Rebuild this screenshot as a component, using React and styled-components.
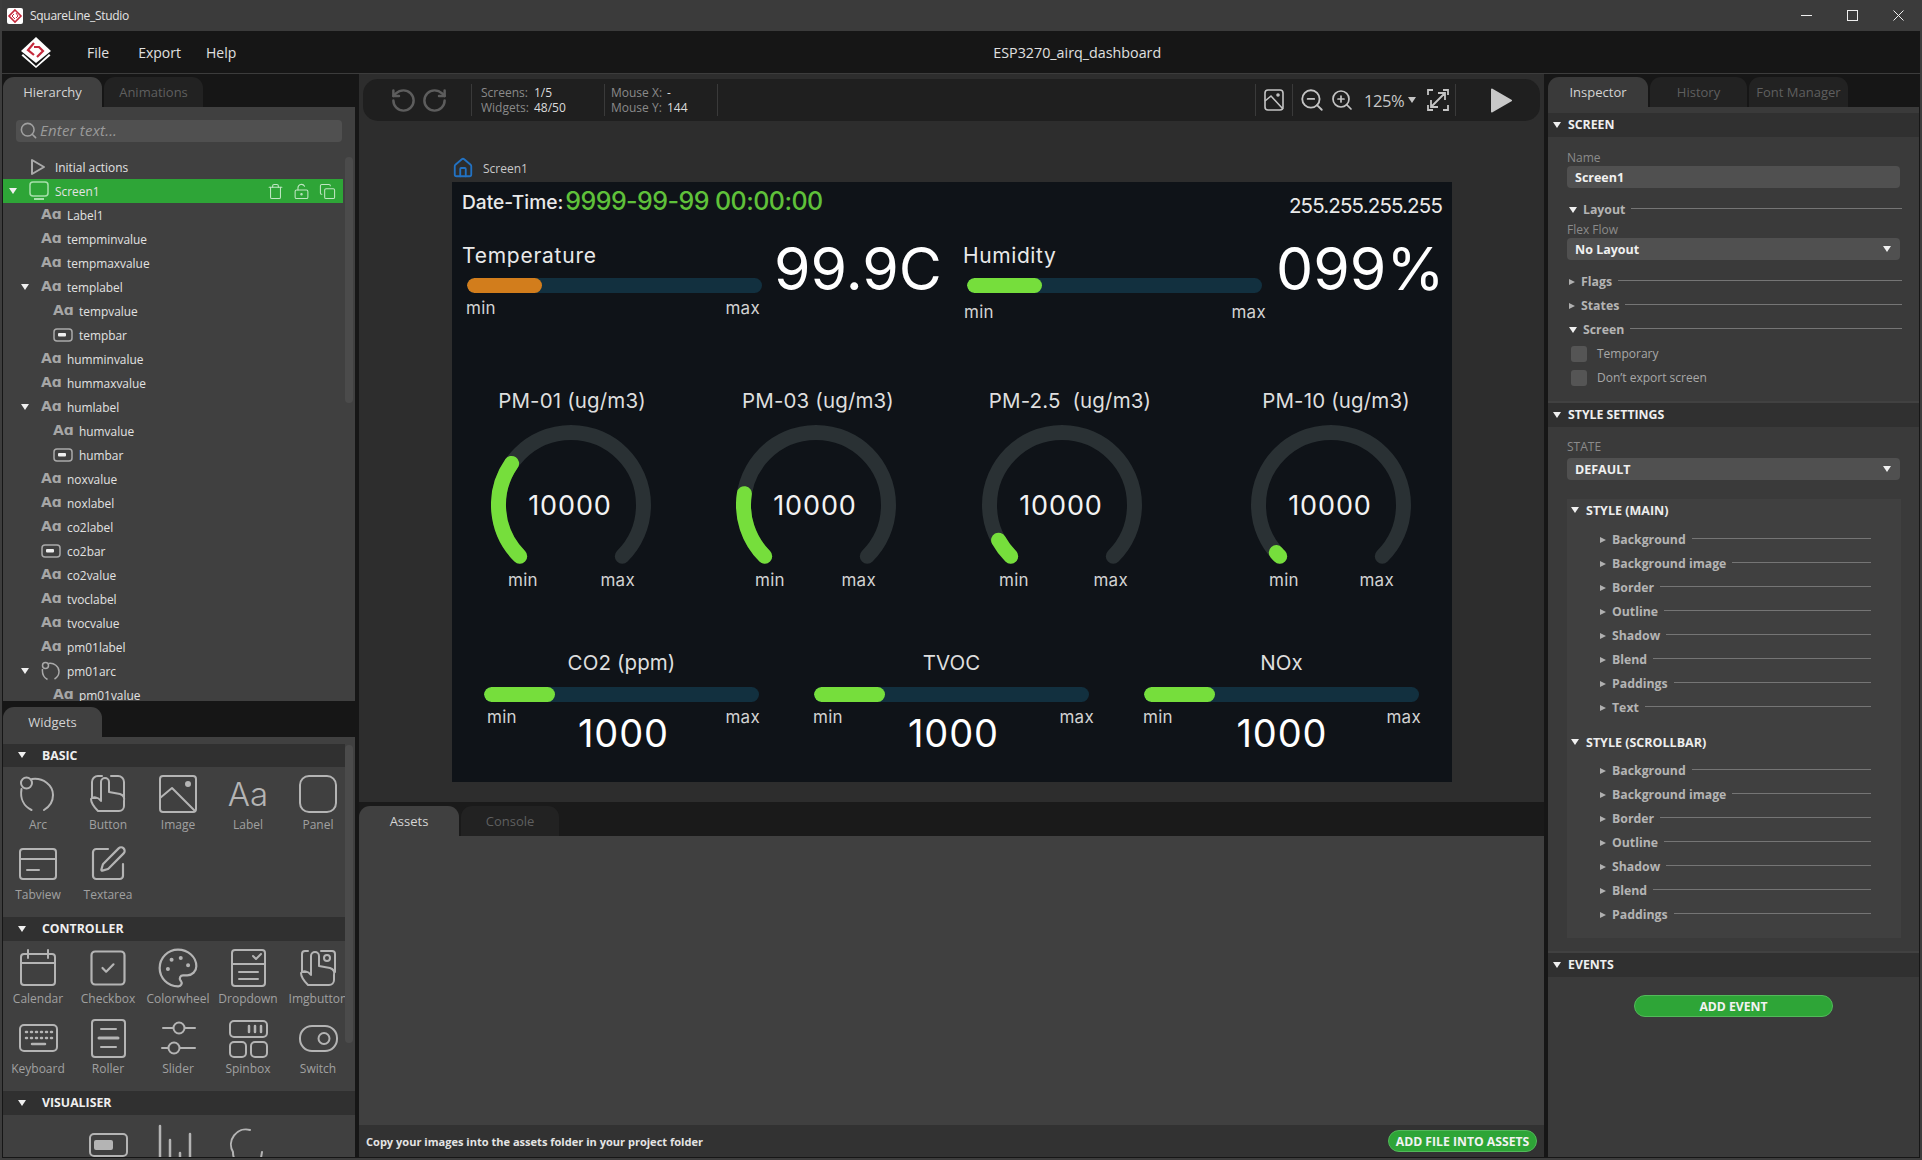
import React from 'react'
import styled, { createGlobalStyle } from 'styled-components'
import { Copy, LockKeyholeOpen, Trash, Search, RotateCcw, RotateCw, ZoomIn, ZoomOut, House, Palette, SquarePen, SquareCheck } from 'lucide-react'

const Global = createGlobalStyle`
    html, body { margin: 0; padding: 0; background: #161616; }
    * { box-sizing: border-box; }
    body { font-family: "Open Sans", "Noto Sans", sans-serif; font-size: 12px; color: #ddd; }
`

const Window = styled.div`
    width: 1922px;
    height: 1160px;
    display: flex;
    flex-direction: column;
    overflow: hidden;
    border: 2px solid #3d3d3d;
    border-top: 0;
    background: #161616;
`
const TitleBar = styled.div`
    height: 31px;
    flex: none;
    display: flex;
    align-items: center;
    padding-left: 7px;
    margin: 0 -2px;
    background: #3b3b3b;
    color: #e4e4e4;
    font-size: 12px;
    letter-spacing: -.3px;
`
const TitleText = styled.span`
    margin-left: 7px;
`
const WinButtons = styled.div`
    margin-left: auto;
    display: flex;
    padding-right: 1px;
`
const WinButton = styled.div`
    width: 46px;
    height: 31px;
    display: flex;
    align-items: center;
    justify-content: center;
`
const MenuBar = styled.div`
    height: 43px;
    flex: none;
    display: flex;
    align-items: center;
    padding-left: 18px;
    background: #161616;
    border-bottom: 1px solid #3c3c3c;
    font-size: 14px;
    color: #e0e0e0;
`
const MenuItem = styled.span`
    margin-left: ${({ $gap }) => $gap}px;
`
const ProjectName = styled.span`
    margin-left: 757px;
    font-size: 14.3px;
`
const Workspace = styled.div`
    flex: 1;
    min-height: 0;
    display: flex;
    padding-left: 1px;
    padding-bottom: 1px;
`
const LeftColumn = styled.div`
    width: 352px;
    flex: none;
    display: flex;
    flex-direction: column;
`
const TabBar = styled.div`
    height: 33px;
    flex: none;
    display: flex;
    gap: 2px;
    padding-top: 3px;
`
const Tab = styled.div`
    width: ${({ $w }) => $w || 99}px;
    height: 30px;
    display: flex;
    align-items: center;
    justify-content: center;
    border-radius: 11px 11px 0 0;
    background: ${({ $active, $bg }) => ($active ? $bg || '#404040' : '#222222')};
    color: ${({ $active }) => ($active ? '#d4d4d4' : '#5f5f5f')};
    font-size: 13px;
`
const TreePanel = styled.div`
    position: relative;
    height: 594px;
    flex: none;
    overflow: hidden;
    background: #404040;
    padding-top: 13px;
`
const SearchBox = styled.div`
    margin: 0 13px 13px;
    height: 22px;
    width: 326px;
    display: flex;
    align-items: center;
    gap: 2px;
    padding: 0 0 2px 3px;
    background: #505050;
    border-radius: 4px;
    color: #9a9a9a;
    font-style: italic;
    font-size: 15px;
    letter-spacing: .2px;
`
const TreeRow = styled.div`
    width: 340px;
    height: 24px;
    display: flex;
    align-items: center;
    padding-left: ${({ $depth }) => 6 + $depth * 12}px;
    background: ${({ $selected }) => ($selected ? '#2ea537' : 'transparent')};
    color: #e2e2e2;
    font-size: 11.9px;
`
const ArrowSlot = styled.div`
    width: 20px;
    flex: none;
    display: flex;
`
const Caret = styled.div`
    width: 0;
    height: 0;
    flex: none;
    border-style: solid;
    border-color: transparent;
    ${({ $open, $color }) => ($open
        ? `border-width: 6.5px 4px 0 4px; border-top-color: ${$color || '#f0f0f0'};`
        : `border-width: 3.5px 0 3.5px 6px; border-left-color: ${$color || '#b0b0b0'};`)}
`
const TreeIcon = styled.div`
    width: 26px;
    flex: none;
    display: flex;
    align-items: center;
    color: #a9a9a9;
`
const AaGlyph = styled.span`
    font-family: "DejaVu Sans", sans-serif;
    font-size: 14px;
    font-weight: 700;
    color: #a6a6a6;
    line-height: 1;
    margin-top: -3px;
`
const RowTools = styled.div`
    margin-left: auto;
    display: flex;
    gap: 9px;
    padding-right: 7px;
    color: #bfe6c2;
`
const ScrollThumb = styled.div`
    position: absolute;
    right: 2px;
    top: ${({ $top }) => $top}px;
    width: 8px;
    height: ${({ $height }) => $height}px;
    border-radius: 4px;
    background: #4b4b4b;
`
const ScrollTrack = styled.div`
    position: absolute;
    right: 0;
    top: 7px;
    width: 10px;
    height: ${({ $height }) => $height}px;
    background: #404040;
`
const WidgetPanel = styled.div`
    position: relative;
    flex: 1;
    min-height: 0;
    overflow: hidden;
    background: #404040;
    padding-top: 7px;
`
const TabGap = styled.div`
    height: 3px;
    flex: none;
`
const SectionHead = styled.div`
    height: ${({ $h }) => $h || 24}px;
    display: flex;
    align-items: center;
    gap: ${({ $gap }) => $gap || 7}px;
    padding-left: ${({ $pad }) => $pad || 5}px;
    padding-bottom: 1px;
    background: #303030;
    color: #efefef;
    font-weight: 700;
    font-size: 12.3px;
`
const WidgetGrid = styled.div`
    display: grid;
    grid-template-columns: repeat(5, 70px);
    grid-auto-rows: 70px;
    padding: 8px 0 2px;
    width: 350px;
`
const WidgetTile = styled.div`
    display: flex;
    flex-direction: column;
    align-items: center;
    color: #b4b4b4;
`
const TileIcon = styled.div`
    height: 40px;
    margin-top: -1px;
    display: flex;
    align-items: center;
    justify-content: center;
`
const TileLabel = styled.div`
    margin-top: 2px;
    font-size: 12px;
    line-height: 18px;
    color: #a0a0a0;
    white-space: nowrap;
`
const BigAa = styled.span`
    font-family: Inter, sans-serif;
    font-size: 33px;
    line-height: 40px;
    font-weight: 300;
    color: #b4b4b4;
`
const Divider = styled.div`
    width: 1px;
    height: 32px;
    flex: none;
    background: #3a3a3a;
`
const Center = styled.div`
    width: 1185px;
    flex: none;
    margin-left: 4px;
    display: flex;
    flex-direction: column;
`
const Stage = styled.div`
    height: 728px;
    flex: none;
    background: #2d2d2d;
    padding-top: 5px;
`
const Toolbar = styled.div`
    height: 42px;
    margin: 0 4px;
    padding-right: 28px;
    display: flex;
    align-items: center;
    background: #1f1f1f;
    border-radius: 15px;
    color: #8a8a8a;
`
const HistoryGroup = styled.div`
    width: 108px;
    flex: none;
    display: flex;
    gap: 4px;
    padding-left: 27px;
    color: #5d5d5d;
`
const StatGroup = styled.div`
    width: ${({ $w }) => $w}px;
    flex: none;
    padding-left: ${({ $pad }) => $pad}px;
    display: grid;
    grid-template-columns: ${({ $label }) => $label}px auto;
    line-height: 15px;
    font-size: 12px;
    align-content: center;
`
const StatValue = styled.span`
    color: #dcdcdc;
`
const ToolSpacer = styled.div`
    flex: 1;
`
const ToolIcon = styled.div`
    display: flex;
    flex: none;
    align-items: center;
    justify-content: center;
    width: ${({ $w }) => $w}px;
    color: #c4c4c4;
`
const ZoomValue = styled.div`
    width: 44px;
    flex: none;
    margin-left: 10px;
    color: #c8c8c8;
    font-size: 16.5px;
    letter-spacing: -.4px;
`
const ZoomCaret = styled.div`
    width: 19px;
    flex: none;
`
const StageBody = styled.div`
    padding-left: 93px;
`
const Breadcrumb = styled.div`
    height: 25px;
    margin-top: 36px;
    display: flex;
    align-items: flex-start;
    gap: 9px;
    color: #c8c8c8;
    line-height: 24px;
`
const Canvas = styled.div`
    width: 1000px;
    height: 600px;
    display: flex;
    flex-direction: column;
    background: #0f1318;
    color: #e9e9e9;
    font-family: Inter, sans-serif;
`
const HeaderRow = styled.div`
    height: 40px;
    flex: none;
    display: flex;
    align-items: center;
    padding: 0 10px;
    font-size: 21px;
`
const DateText = styled.span`
    font-weight: 500;
    font-size: 19.2px;
`
const DateValue = styled.span`
    margin-left: 2px;
    color: #5fc13a;
    font-size: 25px;
    font-weight: 500;
    letter-spacing: -.55px;
    margin-top: -2px;
`
const IpText = styled.span`
    margin-left: auto;
    margin-top: 7px;
    font-size: 20.5px;
    letter-spacing: -.85px;
`
const ClimateRow = styled.div`
    height: 168px;
    flex: none;
    display: flex;
    padding: 22px 0 0 10px;
`
const ClimateBlock = styled.div`
    width: 501px;
    flex: none;
    display: grid;
    grid-template-columns: ${({ $col }) => $col}px auto;
    align-content: start;
`
const ClimateLeft = styled.div`
    display: flex;
    flex-direction: column;
`
const ClimateTitle = styled.div`
    height: 24px;
    line-height: 24px;
    font-size: 21px;
    letter-spacing: ${({ $ls }) => $ls || 0}px;
`
const Track = styled.div`
    width: ${({ $w }) => $w || 295}px;
    height: 15px;
    flex: none;
    margin-top: ${({ $top }) => $top}px;
    margin-left: ${({ $left }) => $left || 0}px;
    border-radius: 8px;
    background: #12303f;
    overflow: hidden;
`
const Fill = styled.div`
    height: 100%;
    border-radius: 8px;
    background: ${({ $color }) => $color};
`
const MinMax = styled.div`
    display: flex;
    justify-content: space-between;
    height: 20px;
    line-height: 20px;
    font-size: 17px;
    color: #d2d2d2;
    margin-top: ${({ $top }) => $top || 0}px;
    margin-left: ${({ $left }) => $left || 0}px;
    margin-right: ${({ $right }) => $right || 0}px;
    width: ${({ $w }) => ($w ? `${$w}px` : 'auto')};
    letter-spacing: .3px;
`
const Reading = styled.div`
    font-size: 59px;
    line-height: 60px;
    margin-top: -5px;
    color: #fff;
    white-space: nowrap;
`
const GaugeRow = styled.div`
    height: 201px;
    flex: none;
    display: flex;
`
const Gauge = styled.div`
    width: 160px;
    flex: none;
    margin-left: ${({ $left }) => $left}px;
`
const GaugeTitle = styled.div`
    height: 24px;
    line-height: 22px;
    margin-bottom: 11px;
    margin-left: ${({ $shift }) => $shift * 2}px;
    display: flex;
    justify-content: center;
    font-size: 20.5px;
    white-space: pre;
    letter-spacing: .15px;
    color: #dedede;
`
const Dial = styled.div`
    position: relative;
    width: 160px;
    height: 146px;
`
const DialValue = styled.div`
    position: absolute;
    left: 0;
    right: 2px;
    top: 66px;
    line-height: 30px;
    text-align: center;
    font-size: 27px;
    letter-spacing: .9px;
    color: #f2f2f2;
`
const BarRow = styled.div`
    margin-top: 61px;
    display: flex;
`
const BarMeter = styled.div`
    width: 275px;
    flex: none;
    margin-left: ${({ $left }) => $left}px;
`
const BarTitle = styled.div`
    height: 24px;
    line-height: 22px;
    text-align: center;
    font-size: 20.5px;
    letter-spacing: .1px;
    color: #dedede;
`
const BarFoot = styled.div`
    display: grid;
    grid-template-columns: 1fr auto 1fr;
    align-items: start;
    margin: 4px ${({ $right }) => $right}px 0 ${({ $left }) => $left}px;
    font-size: 17px;
    line-height: 20px;
    letter-spacing: .3px;
    color: #d2d2d2;
`
const BarMax = styled.span`
    justify-self: end;
    margin-top: 1px;
`
const BarMin = styled.span`
    margin-top: 1px;
`
const BarValue = styled.span`
    margin-top: 5px;
    font-size: 38px;
    line-height: 44px;
    letter-spacing: .9px;
    color: #fff;
`
const BottomTabs = styled.div`
    height: 34px;
    flex: none;
    display: flex;
    gap: 2px;
    padding-top: 4px;
    background: #1a1a1a;
`
const AssetArea = styled.div`
    flex: 1;
    background: #404040;
`
const AssetFooter = styled.div`
    height: 32px;
    flex: none;
    display: flex;
    align-items: center;
    justify-content: space-between;
    padding: 0 7px;
    background: #323232;
    color: #e4e4e4;
    font-weight: 700;
    font-size: 11.05px;
`
const GreenButton = styled.div`
    width: ${({ $w }) => $w}px;
    height: 22px;
    display: flex;
    align-items: center;
    justify-content: center;
    border-radius: 12px;
    border: 1px solid #52b95a;
    background: #2ea537;
    color: #f2f2f2;
    font-weight: 700;
    font-size: 12.2px;
    margin: ${({ $margin }) => $margin || 0};
`
const RightColumn = styled.div`
    width: 371px;
    flex: none;
    margin-left: 4px;
    display: flex;
    flex-direction: column;
`
const Inspector = styled.div`
    flex: 1;
    background: #3a3a3a;
    padding-top: 6px;
`
const Section = styled.div`
    padding: ${({ $pad }) => $pad};
    border-bottom: 2px solid #414141;
`
const FieldLabel = styled.div`
    height: 16px;
    line-height: 15px;
    color: #8b8b8b;
    font-size: 12px;
`
const Field = styled.div`
    width: 333px;
    height: 22px;
    display: flex;
    align-items: center;
    justify-content: space-between;
    padding: 0 9px 0 8px;
    background: #505050;
    border-radius: 4px;
    color: #f0f0f0;
    font-weight: 700;
    font-size: 12.5px;
    margin-top: ${({ $top }) => $top || 0}px;
`
const FoldRow = styled.div`
    height: 24px;
    display: flex;
    align-items: center;
    padding-left: ${({ $indent }) => $indent || 2}px;
    margin-top: ${({ $top }) => $top || 0}px;
    margin-right: ${({ $right }) => $right ?? -1}px;
`
const FoldText = styled.span`
    margin: -2px 0 0 6px;
    color: #b4b4b4;
    font-weight: 700;
    font-size: 12.3px;
`
const FoldLine = styled.div`
    flex: 1;
    height: 1px;
    margin: -3px 0 0 6px;
    background: #757575;
`
const CheckRow = styled.div`
    height: 24px;
    display: flex;
    align-items: center;
    gap: 10px;
    padding-left: 4px;
    color: #a8a8a8;
    font-size: 12px;
`
const CheckText = styled.span`
    margin-top: -2px;
`
const CheckBox = styled.div`
    width: 16px;
    height: 16px;
    border-radius: 3px;
    background: #555;
`
const StyleBox = styled.div`
    margin-top: 19px;
    width: 334px;
    background: #404040;
    padding-bottom: 11px;
`
const StyleHead = styled.div`
    height: 24px;
    display: flex;
    align-items: center;
    gap: 7px;
    padding: 0 0 2px 4px;
    margin-top: ${({ $top }) => $top || 0}px;
    margin-bottom: ${({ $bottom }) => $bottom}px;
    color: #ededed;
    font-weight: 700;
    font-size: 12.5px;
`

const Stroke = styled.svg`
    display: block;
    fill: none;
    stroke: currentColor;
    stroke-width: 2;
    stroke-linecap: round;
    stroke-linejoin: round;
`
const Icon = ({ size = 40, h, children }) => (
    <Stroke width={size} height={h || size} viewBox={`0 0 40 ${h || 40}`}>{children}</Stroke>
)

const ArcIcon = () => <Icon><circle cx="8.5" cy="9" r="5.5" /><path d="M14 5c11 -1.500 21 6 21 16c0 7 -4 12 -9 15M3.500 15c-1.500 9 2 17 10 21" /></Icon>
const HandIcon = () => <Icon><path d="M8 24H4V8a6 6 0 0 1 6-6h4M23 2h7a6 6 0 0 1 6 6v16" /><path d="M10 37c-3-3-7-8-7-12c2-3 7-2 10 2V8a4 4 0 0 1 8 0v10l11 2c3 1 5 3 4 7v5a5 5 0 0 1-5 5z" /></Icon>
const ImageIcon = () => <Icon><rect x="2" y="2" width="36" height="36" rx="3" /><circle cx="30" cy="10" r="2" fill="currentColor" /><path d="M2 24l12-10l23 23" /></Icon>
const PanelIcon = () => <Icon><rect x="2" y="2" width="36" height="36" rx="9" /></Icon>
const TabviewIcon = () => <Icon><rect x="2" y="5" width="36" height="30" rx="3" /><path d="M2 15h36M9 26h12" /></Icon>
const CalendarIcon = () => <Icon><rect x="3" y="6" width="34" height="31" rx="3" /><path d="M3 15h34M10 2v8M30 2v8" /></Icon>
const DropdownIcon = () => <Icon><rect x="4" y="2" width="33" height="36" rx="3" /><path d="M4 16h33M25 8l3 3l5-5M11 24h19M11 31h19" /></Icon>
const ImgButtonIcon = () => <Icon><path d="M8 24H4V6a3 3 0 0 1 3-3h3M23 3h11a3 3 0 0 1 3 3v18" /><circle cx="29" cy="10" r="3" /><path d="M10 37c-3-3-7-8-7-12c2-3 7-2 10 2V8a4 4 0 0 1 8 0v10l11 2c3 1 5 3 4 7v5a5 5 0 0 1-5 5z" /></Icon>
const KeyboardIcon = () => (
    <Icon>
        <rect x="2" y="7" width="37" height="26" rx="4" />
        <path d="M8 14h1M13 14h1M18 14h1M23 14h1M28 14h1M33 14h1M8 20h1M13 20h1M18 20h1M23 20h1M28 20h1M33 20h1M14 26h13" strokeWidth="2.5" />
    </Icon>
)
const RollerIcon = () => <Icon><rect x="4" y="2" width="33" height="37" rx="3" /><path d="M13 11h15M11 20h19" /><path d="M11 20h19" strokeWidth="3" /><path d="M13 29h15" /></Icon>
const SliderIcon = () => <Icon><circle cx="21" cy="10" r="5.500" /><circle cx="16" cy="30" r="5.500" /><path d="M5 10h10M27 10h10M4 30h6M22 30h15" /></Icon>
const SpinboxIcon = () => <Icon><rect x="2" y="3" width="37" height="16" rx="4" /><rect x="2" y="24" width="16" height="15" rx="4" /><rect x="23" y="24" width="16" height="15" rx="4" /><path d="M21 8v6M27 8v6M33 8v6" strokeWidth="2.500" /></Icon>
const SwitchIcon = () => <Icon><rect x="2" y="8" width="37" height="25" rx="12" /><circle cx="26" cy="20.500" r="5.500" /></Icon>
const BarIcon = () => <Icon><rect x="2" y="12" width="37" height="22" rx="4" /><rect x="7" y="19" width="17" height="8" rx="1" fill="currentColor" /></Icon>
const ChartIcon = () => <Icon><path d="M2 4v32M12 18v18M22 31v5M32 12v24" strokeWidth="2.500" /></Icon>
const SpinnerIcon = () => <Icon><path d="M22 8a15 15 0 0 0-17 22a15 15 0 0 0 1 6M34 30l-1 6" /></Icon>

const Aa = () => <AaGlyph>Aɑ</AaGlyph>
const MiniBar = () => (
    <svg width="20" height="16" viewBox="0 0 20 16" fill="none" stroke="#a9a9a9" strokeWidth="1.500">
        <rect x="1" y="2" width="18" height="12" rx="3" />
        <rect x="5" y="6" width="8" height="3.500" rx="1" fill="#eee" stroke="none" />
    </svg>
)
const MiniArc = () => (
    <svg width="20" height="20" viewBox="0 0 40 40" fill="none" stroke="#a9a9a9" strokeWidth="3">
        <circle cx="9" cy="9" r="6" />
        <path d="M15 5c11-2 21 6 21 16c0 7-4 12-9 15M3 16c-1 9 3 17 10 21" />
    </svg>
)
const MiniMonitor = () => (
    <svg width="20" height="20" viewBox="0 0 20 20" fill="none" stroke="#a7e0ab" strokeWidth="1.500">
        <rect x="1" y="1" width="18" height="14" rx="3" />
        <path d="M5 18h10" strokeWidth="2" />
    </svg>
)
const MiniPlay = () => (
    <svg width="20" height="18" viewBox="0 0 20 18" fill="none" stroke="#a9a9a9" strokeWidth="2" strokeLinejoin="round">
        <path d="M3 2v14l12-7z" />
    </svg>
)
const MiniOf = { text: Aa, bar: MiniBar, arc: MiniArc }

const Logo = () => (
    <svg width="32" height="32" viewBox="0 0 32 32">
        <path d="M16 1L31 15L16 27L1 15z" fill="#fff" />
        <path d="M3 18l13 12l13-12l1.500 1.500L16 32L1.500 19.500z" fill="#fff" />
        <path d="M14 7L8 14l6 5M14 11h5l4 4l-6 6" fill="none" stroke="#c4293c" strokeWidth="2.200" />
    </svg>
)
const TitleLogo = () => (
    <svg width="16" height="16" viewBox="0 0 16 16">
        <rect width="16" height="16" rx="2" fill="#fff" />
        <path d="M8 2l6 6l-6 6l-6-6z" fill="none" stroke="#c4293c" strokeWidth="1.600" />
        <path d="M7 6L5 8l3 3M9 5l2 3l-2 2" fill="none" stroke="#c4293c" strokeWidth="1" />
    </svg>
)
const ImageTool = () => (
    <svg width="20" height="22" viewBox="0 0 20 22" fill="none" stroke="currentColor" strokeWidth="1.600">
        <rect x="1" y="1" width="18" height="20" rx="3" />
        <circle cx="14" cy="6" r="1" fill="currentColor" />
        <path d="M1 12l6-5l12 13" />
    </svg>
)
const FitTool = () => (
    <svg width="22" height="22" viewBox="0 0 22 22" fill="none" stroke="currentColor" strokeWidth="1.800">
        <path d="M1 6V1h5M16 1h5v5M1 16v5h5M21 16v5h-5M17 5L5 17M11 4h7v7M4 11v7h7" />
    </svg>
)

const polar = (deg, r = 72.5) => {
    const a = (deg * Math.PI) / 180
    return `${(80 + r * Math.cos(a)).toFixed(2)} ${(80 + r * Math.sin(a)).toFixed(2)}`
}
const arcPath = (sweep) => `M${polar(135)} A72.5 72.5 0 ${sweep > 180 ? 1 : 0} 1 ${polar(135 + sweep)}`

const GaugeArc = ({ sweep }) => (
    <svg width="160" height="146" viewBox="0 0 160 146" fill="none" strokeWidth="15" strokeLinecap="round">
        <path d={arcPath(270)} stroke="#2a3134" />
        <path d={arcPath(sweep)} stroke="#76de3c" />
    </svg>
)

const tree = [
    ['Label1', 1, 'text'], ['tempminvalue', 1, 'text'], ['tempmaxvalue', 1, 'text'], ['templabel', 1, 'text', true],
    ['tempvalue', 2, 'text'], ['tempbar', 2, 'bar'], ['humminvalue', 1, 'text'], ['hummaxvalue', 1, 'text'],
    ['humlabel', 1, 'text', true], ['humvalue', 2, 'text'], ['humbar', 2, 'bar'], ['noxvalue', 1, 'text'],
    ['noxlabel', 1, 'text'], ['co2label', 1, 'text'], ['co2bar', 1, 'bar'], ['co2value', 1, 'text'],
    ['tvoclabel', 1, 'text'], ['tvocvalue', 1, 'text'], ['pm01label', 1, 'text'], ['pm01arc', 1, 'arc', true],
    ['pm01value', 2, 'text'],
]

const basic = [
    ['Arc', ArcIcon], ['Button', HandIcon], ['Image', ImageIcon], ['Label', () => <BigAa>Aa</BigAa>], ['Panel', PanelIcon],
    ['Tabview', TabviewIcon], ['Textarea', () => <SquarePen size={40} strokeWidth={1.3} />],
]
const controller = [
    ['Calendar', CalendarIcon], ['Checkbox', () => <SquareCheck size={44} strokeWidth={1.2} />], ['Colorwheel', () => <Palette size={44} strokeWidth={1.2} />], ['Dropdown', DropdownIcon], ['Imgbutton', ImgButtonIcon],
    ['Keyboard', KeyboardIcon], ['Roller', RollerIcon], ['Slider', SliderIcon], ['Spinbox', SpinboxIcon], ['Switch', SwitchIcon],
]
const visualiser = [[null, null], ['', BarIcon], ['', ChartIcon], ['', SpinnerIcon]]

const gauges = [
    { name: 'PM-01 (ug/m3)', left: 39, shift: 1, sweep: 80, pad: [17, 16] },
    { name: 'PM-03 (ug/m3)', left: 85, shift: 2, sweep: 54, pad: [19, 20] },
    { name: 'PM-2.5  (ug/m3)', left: 86, shift: 8, sweep: 16, pad: [17, 14] },
    { name: 'PM-10 (ug/m3)', left: 109, shift: 5, sweep: 4, pad: [18, 17] },
]
const bars = [
    { name: 'CO2 (ppm)', left: 32, l: 3, r: -1 },
    { name: 'TVOC', left: 55, l: -1, r: -5 },
    { name: 'NOx', left: 55, l: -1, r: -2 },
]
const mainStyles = ['Background', 'Background image', 'Border', 'Outline', 'Shadow', 'Blend', 'Paddings', 'Text']
const scrollStyles = ['Background', 'Background image', 'Border', 'Outline', 'Shadow', 'Blend', 'Paddings']

const Fold = ({ label, open, indent, top, right }) => (
    <FoldRow $indent={indent} $top={top} $right={right}>
        <Caret $open={open} />
        <FoldText>{label}</FoldText>
        <FoldLine />
    </FoldRow>
)

const Tiles = ({ items }) => (
    <WidgetGrid>
        {items.map(([label, Glyph], i) => (
            <WidgetTile key={i}>
                {Glyph && <TileIcon><Glyph /></TileIcon>}
                {label && <TileLabel>{label}</TileLabel>}
            </WidgetTile>
        ))}
    </WidgetGrid>
)

export default function App() {
    return (
        <Window>
            <Global />
            <TitleBar>
                <TitleLogo />
                <TitleText>SquareLine_Studio</TitleText>
                <WinButtons>
                    <WinButton><svg width="11" height="11" stroke="#eee"><path d="M0 5.500h11" /></svg></WinButton>
                    <WinButton><svg width="11" height="11" fill="none" stroke="#eee"><rect x=".5" y=".5" width="10" height="10" /></svg></WinButton>
                    <WinButton><svg width="11" height="11" stroke="#eee"><path d="M.5 .5l10 10M10.500 .5l-10 10" /></svg></WinButton>
                </WinButtons>
            </TitleBar>
            <MenuBar>
                <Logo />
                <MenuItem $gap={35}>File</MenuItem>
                <MenuItem $gap={29}>Export</MenuItem>
                <MenuItem $gap={25}>Help</MenuItem>
                <ProjectName>ESP3270_airq_dashboard</ProjectName>
            </MenuBar>
            <Workspace>
                <LeftColumn>
                    <TabBar>
                        <Tab $active>Hierarchy</Tab>
                        <Tab>Animations</Tab>
                    </TabBar>
                    <TreePanel>
                        <SearchBox><Search size={19} color="#a0a0a0" strokeWidth={2} />Enter text...</SearchBox>
                        <TreeRow $depth={0}>
                            <ArrowSlot />
                            <TreeIcon><MiniPlay /></TreeIcon>
                            Initial actions
                        </TreeRow>
                        <TreeRow $depth={0} $selected>
                            <ArrowSlot><Caret $open /></ArrowSlot>
                            <TreeIcon><MiniMonitor /></TreeIcon>
                            Screen1
                            <RowTools>
                                <Trash size={17} strokeWidth={1.500} />
                                <LockKeyholeOpen size={17} strokeWidth={1.500} />
                                <Copy size={17} strokeWidth={1.500} />
                            </RowTools>
                        </TreeRow>
                        {tree.map(([name, depth, kind, open]) => {
                            const Mini = MiniOf[kind]
                            return (
                                <TreeRow key={name} $depth={depth}>
                                    <ArrowSlot>{open && <Caret $open />}</ArrowSlot>
                                    <TreeIcon><Mini /></TreeIcon>
                                    {name}
                                </TreeRow>
                            )
                        })}
                        <ScrollThumb $top={50} $height={246} />
                    </TreePanel>
                    <TabGap />
                    <TabBar>
                        <Tab $active>Widgets</Tab>
                    </TabBar>
                    <WidgetPanel>
                        <SectionHead $h={23} $pad={15} $gap={16}><Caret $open />BASIC</SectionHead>
                        <Tiles items={basic} />
                        <SectionHead $pad={15} $gap={16}><Caret $open />CONTROLLER</SectionHead>
                        <Tiles items={controller} />
                        <SectionHead $pad={15} $gap={16}><Caret $open />VISUALISER</SectionHead>
                        <Tiles items={visualiser} />
                        <ScrollTrack $height={347} />
                        <ScrollThumb $top={8} $height={298} />
                    </WidgetPanel>
                </LeftColumn>
                <Center>
                    <Stage>
                        <Toolbar>
                            <HistoryGroup>
                                <RotateCcw size={27} strokeWidth={2.200} />
                                <RotateCw size={27} strokeWidth={2.200} />
                            </HistoryGroup>
                            <Divider />
                            <StatGroup $w={132} $pad={9} $label={53}>
                                <span>Screens:</span><StatValue>1/5</StatValue>
                                <span>Widgets:</span><StatValue>48/50</StatValue>
                            </StatGroup>
                            <Divider />
                            <StatGroup $w={112} $pad={6} $label={56}>
                                <span>Mouse X:</span><StatValue>-</StatValue>
                                <span>Mouse Y:</span><StatValue>144</StatValue>
                            </StatGroup>
                            <Divider />
                            <ToolSpacer />
                            <Divider />
                            <ToolIcon $w={36}><ImageTool /></ToolIcon>
                            <Divider />
                            <ToolIcon $w={37}><ZoomOut size={26} strokeWidth={1.700} /></ToolIcon>
                            <ToolIcon $w={24}><ZoomIn size={26} strokeWidth={1.700} /></ToolIcon>
                            <ZoomValue>125%</ZoomValue>
                            <ZoomCaret><Caret $open $color="#c4c4c4" /></ZoomCaret>
                            <ToolIcon $w={22}><FitTool /></ToolIcon>
                            <ToolIcon $w={6} />
                            <Divider />
                            <ToolIcon $w={34} />
                            <ToolIcon $w={22}>
                                <svg width="22" height="25" viewBox="0 0 22 25"><path d="M2 1.500L21 12.500L2 23.500z" fill="#c8c8c8" stroke="#c8c8c8" strokeLinejoin="round" strokeWidth="2" /></svg>
                            </ToolIcon>
                        </Toolbar>
                        <StageBody>
                            <Breadcrumb>
                                <House size={22} color="#2272c3" strokeWidth={2} />
                                Screen1
                            </Breadcrumb>
                            <Canvas>
                                <HeaderRow>
                                    <DateText>Date-Time:</DateText>
                                    <DateValue>9999-99-99 00:00:00</DateValue>
                                    <IpText>255.255.255.255</IpText>
                                </HeaderRow>
                                <ClimateRow>
                                    <ClimateBlock $col={312}>
                                        <ClimateLeft>
                                            <ClimateTitle $ls={.75}>Temperature</ClimateTitle>
                                            <Track $top={10} $left={5}><Fill $color="#d27d1c" style={{ width: '25.500%' }} /></Track>
                                            <MinMax $top={5} $left={4} $w={294}><span>min</span><span>max</span></MinMax>
                                        </ClimateLeft>
                                        <Reading>99.9C</Reading>
                                    </ClimateBlock>
                                    <ClimateBlock $col={313}>
                                        <ClimateLeft>
                                            <ClimateTitle $ls={.6}>Humidity</ClimateTitle>
                                            <Track $top={10} $left={4}><Fill $color="#76de3c" style={{ width: '25.500%' }} /></Track>
                                            <MinMax $top={9} $left={1} $w={302}><span>min</span><span>max</span></MinMax>
                                        </ClimateLeft>
                                        <Reading>099%</Reading>
                                    </ClimateBlock>
                                </ClimateRow>
                                <GaugeRow>
                                    {gauges.map((g) => (
                                        <Gauge key={g.name} $left={g.left}>
                                            <GaugeTitle $shift={g.shift}>{g.name}</GaugeTitle>
                                            <Dial>
                                                <GaugeArc sweep={g.sweep} />
                                                <DialValue>10000</DialValue>
                                            </Dial>
                                            <MinMax $top={-1} $left={g.pad[0]} $right={g.pad[1]}><span>min</span><span>max</span></MinMax>
                                        </Gauge>
                                    ))}
                                </GaugeRow>
                                <BarRow>
                                    {bars.map((b) => (
                                        <BarMeter key={b.name} $left={b.left}>
                                            <BarTitle>{b.name}</BarTitle>
                                            <Track $top={11} $w={275}><Fill $color="#76de3c" style={{ width: '25.800%' }} /></Track>
                                            <BarFoot $left={b.l} $right={b.r}>
                                                <BarMin>min</BarMin>
                                                <BarValue>1000</BarValue>
                                                <BarMax>max</BarMax>
                                            </BarFoot>
                                        </BarMeter>
                                    ))}
                                </BarRow>
                            </Canvas>
                        </StageBody>
                    </Stage>
                    <BottomTabs>
                        <Tab $active $w={100}>Assets</Tab>
                        <Tab $w={98}>Console</Tab>
                    </BottomTabs>
                    <AssetArea />
                    <AssetFooter>
                        Copy your images into the assets folder in your project folder
                        <GreenButton $w={149}>ADD FILE INTO ASSETS</GreenButton>
                    </AssetFooter>
                </Center>
                <RightColumn>
                    <TabBar>
                        <Tab $active $bg="#3a3a3a" $w={100}>Inspector</Tab>
                        <Tab $w={97}>History</Tab>
                        <Tab $w={99}>Font Manager</Tab>
                    </TabBar>
                    <Inspector>
                        <SectionHead><Caret $open />SCREEN</SectionHead>
                        <Section $pad="13px 18px 11px 19px">
                            <FieldLabel>Name</FieldLabel>
                            <Field>Screen1</Field>
                            <Fold label="Layout" open top={10} />
                            <FieldLabel>Flex Flow</FieldLabel>
                            <Field>No Layout<Caret $open /></Field>
                            <Fold label="Flags" top={10} />
                            <Fold label="States" />
                            <Fold label="Screen" open />
                            <CheckRow><CheckBox /><CheckText>Temporary</CheckText></CheckRow>
                            <CheckRow><CheckBox /><CheckText>Don’t export screen</CheckText></CheckRow>
                        </Section>
                        <SectionHead><Caret $open />STYLE SETTINGS</SectionHead>
                        <Section $pad="12px 18px 13px 19px">
                            <FieldLabel>STATE</FieldLabel>
                            <Field $top={3}>DEFAULT<Caret $open /></Field>
                            <StyleBox>
                                <StyleHead $bottom={5}><Caret $open />STYLE (MAIN)</StyleHead>
                                {mainStyles.map((s) => <Fold key={s} label={s} indent={33} right={30} />)}
                                <StyleHead $top={11} $bottom={4}><Caret $open />STYLE (SCROLLBAR)</StyleHead>
                                {scrollStyles.map((s) => <Fold key={s} label={s} indent={33} right={30} />)}
                            </StyleBox>
                        </Section>
                        <SectionHead><Caret $open />EVENTS</SectionHead>
                        <GreenButton $w={199} $margin="18px auto 0">ADD EVENT</GreenButton>
                    </Inspector>
                </RightColumn>
            </Workspace>
        </Window>
    )
}
